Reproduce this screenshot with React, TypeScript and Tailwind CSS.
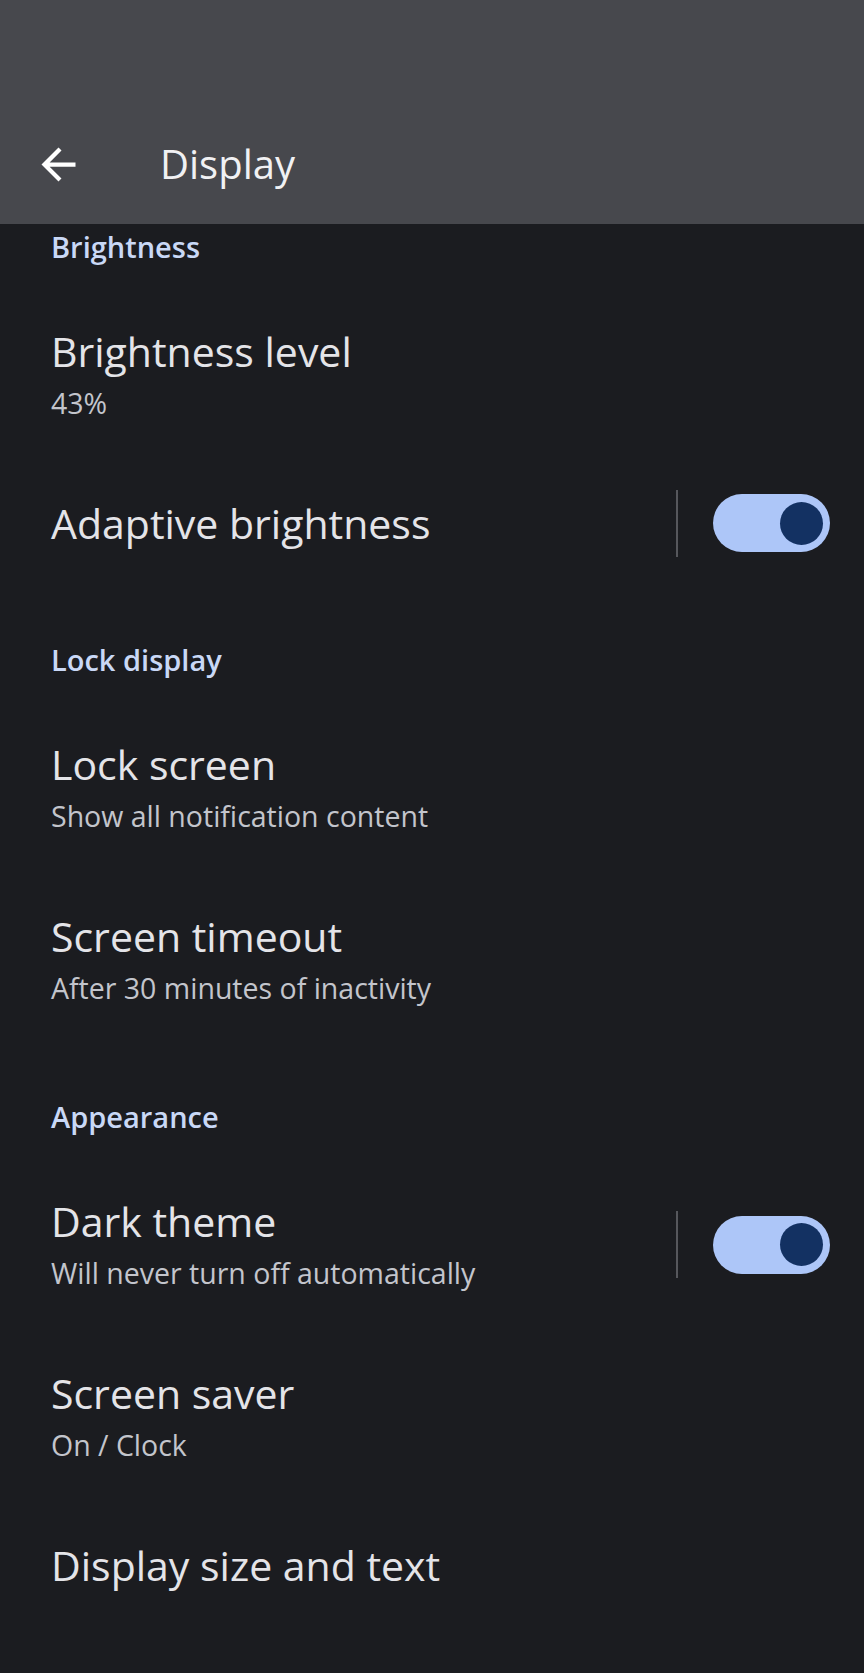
import { FC } from "react";

const font = { fontFamily: '"Open Sans", "Noto Sans", sans-serif' };

const Toggle: FC = () => (
  <div className="flex items-center h-full">
    <div className="w-[2px] h-[67px] bg-[#56575c] mr-[35px]" />
    <div className="w-[117px] h-[58px] rounded-full bg-[#adc6f8] flex items-center justify-end pr-[7px]">
      <div className="w-[43px] h-[43px] rounded-full bg-[#133162]" />
    </div>
  </div>
);

const SectionLabel: FC<{ text: string; pt: string }> = ({ text, pt }) => (
  <div className={`${pt} pb-[27px] pl-[51px]`}>
    <p className="text-[29px] leading-[34px] font-semibold text-[#c9d8f6]">{text}</p>
  </div>
);

const Row: FC<{ title: string; summary?: string; toggle?: boolean; h: string }> = ({
  title,
  summary,
  toggle,
  h,
}) => (
  <div className={`${h} flex items-center pl-[51px] pr-[34px] ${summary ? "pb-[5px]" : ""}`}>
    <div className="flex-1 flex flex-col gap-[11px]">
      <p className="text-[41px] leading-[46px] text-[#e4e4e8]">{title}</p>
      {summary && <p className="text-[28.5px] leading-[36px] text-[#c3c5cc]">{summary}</p>}
    </div>
    {toggle && <Toggle />}
  </div>
);

const App: FC = () => {
  return (
    <div className="w-[864px] h-[1673px] bg-[#1b1c20] overflow-hidden" style={font}>
      <header className="h-[224px] bg-[#47484d] pt-[132px]">
        <div className="h-[64px] flex items-center">
          <svg
            className="ml-[33px] w-[51px] h-[51px] text-white"
            viewBox="0 0 24 24"
            fill="currentColor"
            aria-hidden="true"
          >
            <path d="M20 11H7.83l5.59-5.59L12 4l-8 8 8 8 1.41-1.41L7.83 13H20v-2z" />
          </svg>
          <h1 className="ml-[76px] text-[40px] leading-[46px] text-[#f1f1f3]">Display</h1>
        </div>
      </header>

      <SectionLabel text="Brightness" pt="pt-[6px]" />
      <Row title="Brightness level" summary="43%" h="h-[172px]" />
      <Row title="Adaptive brightness" toggle h="h-[120px]" />

      <SectionLabel text="Lock display" pt="pt-[60px]" />
      <Row title="Lock screen" summary="Show all notification content" h="h-[172px]" />
      <Row title="Screen timeout" summary="After 30 minutes of inactivity" h="h-[172px]" />

      <SectionLabel text="Appearance" pt="pt-[52px]" />
      <Row title="Dark theme" summary="Will never turn off automatically" toggle h="h-[172px]" />
      <Row title="Screen saver" summary="On / Clock" h="h-[172px]" />
      <Row title="Display size and text" h="h-[120px]" />
    </div>
  );
};

export default App;
